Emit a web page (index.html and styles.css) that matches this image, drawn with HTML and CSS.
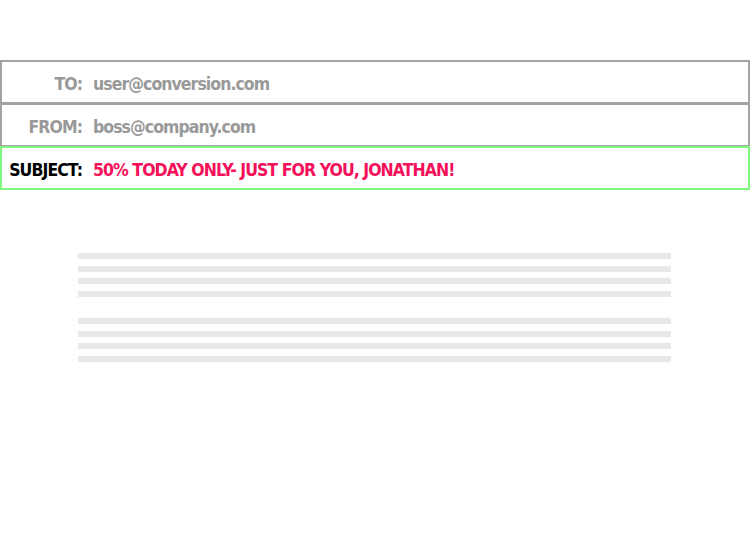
FILE: index.html
```html
<!DOCTYPE html>
<html>
<head>
<meta charset="utf-8">
<link rel="stylesheet" href="styles.css">
</head>
<body>
<div class="mail">
  <div class="row">
    <span class="label">TO:</span>
    <span class="value">user@conversion.com</span>
  </div>
  <div class="row">
    <span class="label">FROM:</span>
    <span class="value">boss@company.com</span>
  </div>
  <div class="row subject">
    <span class="label">SUBJECT:</span>
    <span class="value">50% TODAY ONLY- JUST FOR YOU, JONATHAN!</span>
  </div>
</div>
<div class="body">
  <div class="para">
    <div class="line"></div>
    <div class="line"></div>
    <div class="line"></div>
    <div class="line"></div>
  </div>
  <div class="para">
    <div class="line"></div>
    <div class="line"></div>
    <div class="line"></div>
    <div class="line"></div>
  </div>
</div>
</body>
</html>
```
FILE: styles.css
```css
html, body {
  margin: 0;
  padding: 0;
  background: #ffffff;
}
body {
  width: 750px;
  height: 550px;
  font-family: "DejaVu Sans Condensed", "DejaVu Sans", sans-serif;
}
.mail {
  padding-top: 60px;
}
.row {
  position: relative;
  display: flex;
  align-items: center;
  box-sizing: border-box;
  height: 44px;
  border: 2px solid #a3a3a3;
  margin-top: -1px;
  padding-top: 3px;
  font-weight: bold;
  font-size: 17.5px;
  letter-spacing: -0.95px;
  color: #999999;
}
.row:first-child {
  margin-top: 0;
}
.row.subject {
  border-color: #80f880;
  z-index: 1;
}
.label {
  width: 80px;
  text-align: right;
  flex: none;
}
.value {
  margin-left: 11px;
}
.subject .label {
  color: #000000;
}
.subject .value {
  color: #f5105a;
}
.body {
  margin: 63px 79px 0 78px;
  display: flex;
  flex-direction: column;
  gap: 21px;
}
.para {
  display: flex;
  flex-direction: column;
  gap: 6.7px;
}
.line {
  height: 6px;
  background: #e8e8e8;
}
```
